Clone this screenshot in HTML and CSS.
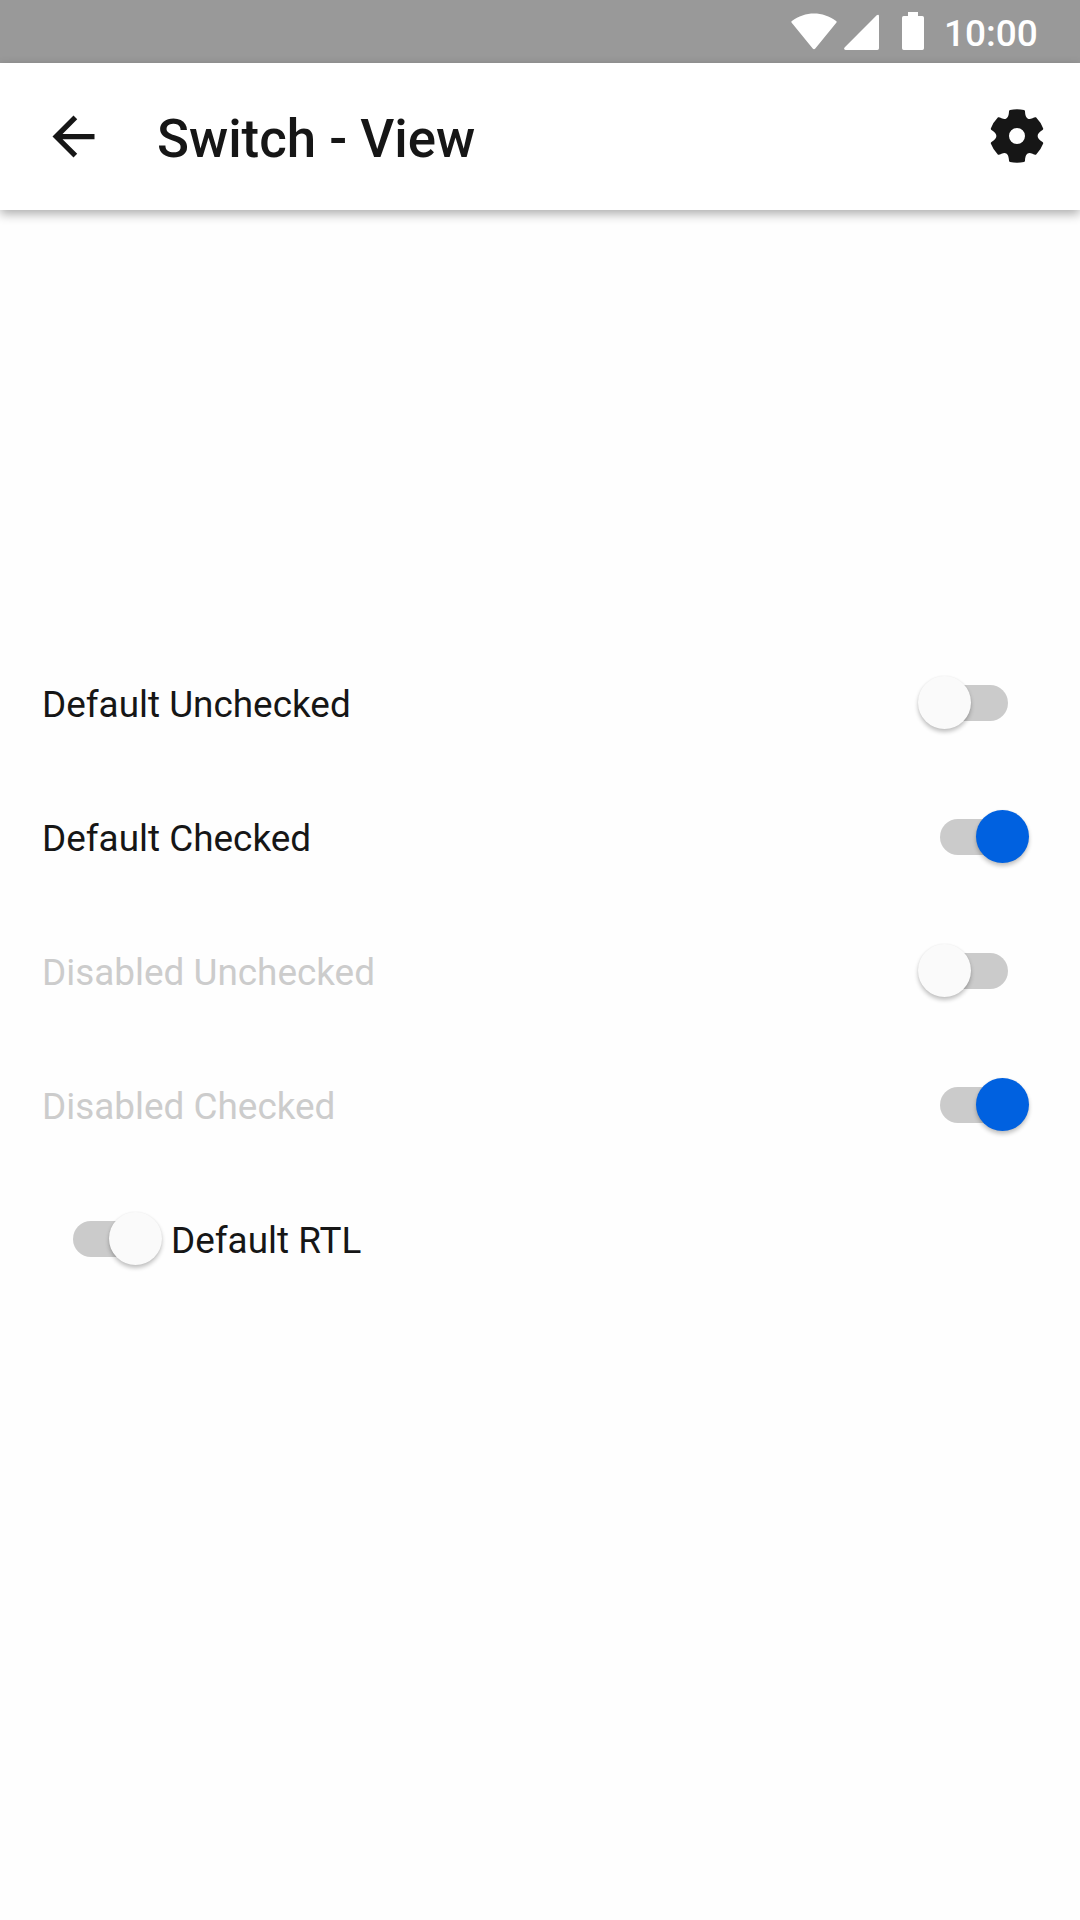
FILE: index.html
```html
<!DOCTYPE html>
<html lang="en">
<head>
<meta charset="utf-8">
<title>Switch - View</title>
<link rel="stylesheet" href="styles.css">
</head>
<body>
<div class="status-bar">
  <svg class="wifi" width="46" height="37" viewBox="0 0 46 37"><path d="M.7 9.700Q-.2 8.700.9 7.900C14-2.100 32-2.100 45.100 7.900Q46.200 8.700 45.300 9.700L24.300 35.500Q23 37 21.700 35.500Z"/></svg>
  <svg class="signal" width="35" height="36" viewBox="0 0 35 36"><path d="M.6 33.500L32.700 1.200Q35 0 35 2.200V34.300Q35 36 33.300 36H1.500Q-.8 35.500.6 33.500Z"/></svg>
  <svg class="battery" width="22" height="38" viewBox="0 0 22 38"><path d="M6 0H16V4H20.300Q22 4 22 5.700V36.300Q22 38 20.300 38H1.700Q0 38 0 36.300V5.700Q0 4 1.700 4H6Z"/></svg>
  <span class="clock">10:00</span>
</div>
<header class="app-bar">
  <svg class="back" width="63" height="63" viewBox="0 0 24 24"><path d="M20 11H7.830l5.590-5.590L12 4l-8 8 8 8 1.410-1.410L7.830 13H20z"/></svg>
  <h1 class="title">Switch - View</h1>
  <svg class="gear" width="54" height="54" viewBox="0 0 54 54"><path fill-rule="evenodd" d="M20 .9Q27-.5 34 .9Q35 1.200 35 2.500C35.300 8.500 37.500 11.500 42.500 9.300Q44.500 8 46 8.300Q51 13.500 53.200 19.500Q53.300 20.500 52.500 21C46 25 46 29 52.500 33Q53.300 33.500 53.200 34.500Q51 40.500 46 45.700Q44.500 46 42.500 44.700C37.500 42.500 35.300 45.500 35 51.500Q35 52.800 34 53.100Q27 54.500 20 53.100Q19 52.800 19 51.500C18.700 45.500 16.500 42.500 11.500 44.700Q9.500 46 8 45.700Q3 40.500.8 34.500Q.7 33.500 1.500 33C8 29 8 25 1.500 21Q.7 20.500.8 19.500Q3 13.500 8 8.300Q9.500 8 11.500 9.300C16.500 11.500 18.700 8.500 19 2.500Q19 1.200 20 .9ZM27 19a8 8 0 1 0 0 16a8 8 0 1 0 0-16Z"/></svg>
</header>
<main class="list">
  <div class="row"><span class="label">Default Unchecked</span><span class="switch"><span class="thumb"></span></span></div>
  <div class="row"><span class="label">Default Checked</span><span class="switch checked"><span class="thumb"></span></span></div>
  <div class="row disabled"><span class="label">Disabled Unchecked</span><span class="switch"><span class="thumb"></span></span></div>
  <div class="row disabled"><span class="label">Disabled Checked</span><span class="switch checked"><span class="thumb"></span></span></div>
  <div class="row rtl"><span class="label">Default RTL</span><span class="switch"><span class="thumb"></span></span></div>
</main>
</body>
</html>
```

FILE: styles.css
```css
* { box-sizing: border-box; }

body {
  margin: 0;
  height: 1920px;
  background: #fefefe;
  color: #161616;
  font-family: Roboto, sans-serif;
  overflow: hidden;
}

svg { display: block; flex: none; }

.status-bar {
  display: flex;
  align-items: flex-start;
  height: 63px;
  padding: 12px 0 0 791px;
  background: #999;
  color: #fff;
  fill: #fff;
}

.wifi { margin-top: 1px; }
.signal { margin: 2px 0 0 7px; }
.battery { margin-left: 23px; }

.clock {
  margin-left: 20px;
  font-size: 37px;
  font-weight: 500;
  line-height: 44px;
}

.app-bar {
  display: flex;
  align-items: center;
  height: 147px;
  padding: 0 36.500px 0 42px;
  background: #fff;
  fill: #161616;
  box-shadow: 0 4px 10px rgba(0, 0, 0, .32);
}

.title {
  flex: 1;
  margin: 5px 0 0 52px;
  font-size: 52.8px;
  font-weight: 500;
  line-height: 62px;
}

.gear { margin-bottom: 2px; }

.list { padding: 426px 72.5px 0 42px; }

.row {
  display: flex;
  align-items: center;
  justify-content: space-between;
  height: 134px;
}

.rtl {
  flex-direction: row-reverse;
  justify-content: flex-end;
  gap: 30.5px;
  padding-left: 30.5px;
}

.label {
  padding-top: 4px;
  font-size: 36.900px;
  line-height: 44px;
}

.disabled .label { color: #ccc; }

.switch {
  display: flex;
  align-items: center;
  width: 68px;
  height: 36px;
  border-radius: 18px;
  background: #cbcbcb;
}

.thumb {
  flex: none;
  width: 53px;
  height: 53px;
  margin: -1px 0 0 -21.5px;
  border-radius: 50%;
  background: #fafafa;
  box-shadow: 0 3px 4px rgba(0, 0, 0, .24), 0 0 2px rgba(0, 0, 0, .06);
}

.checked .thumb,
.rtl .thumb { margin-left: 36.5px; }

.checked .thumb { background: #0061e0; }
```
